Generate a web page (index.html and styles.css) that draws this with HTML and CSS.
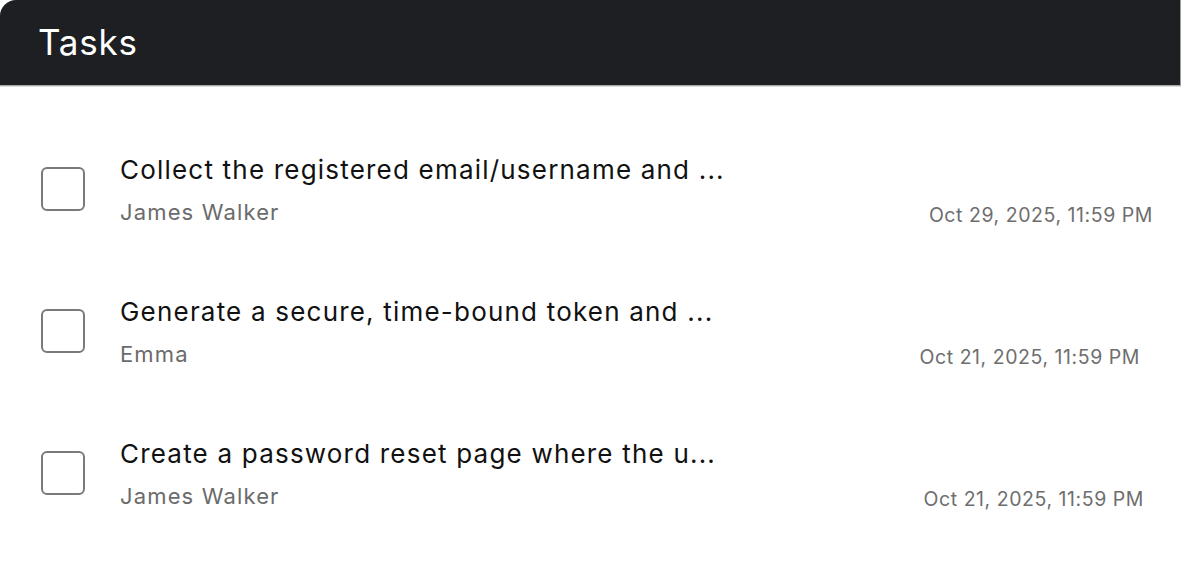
FILE: index.html
```html
<!DOCTYPE html>
<html lang="en">
<head>
<meta charset="utf-8">
<title>Tasks</title>
<link rel="stylesheet" href="styles.css">
</head>
<body>
<div class="card">
  <header class="header">
    <h1 class="header-title">Tasks</h1>
  </header>
  <ul class="list">
    <li class="row">
      <span class="check"></span>
      <div class="main">
        <div class="title">Collect the registered email/username and ...</div>
        <div class="meta">
          <span class="assignee">James Walker</span>
          <span class="date date-a">Oct 29, 2025, 11:59 PM</span>
        </div>
      </div>
    </li>
    <li class="row">
      <span class="check"></span>
      <div class="main">
        <div class="title">Generate a secure, time-bound token and ...</div>
        <div class="meta">
          <span class="assignee">Emma</span>
          <span class="date date-b">Oct 21, 2025, 11:59 PM</span>
        </div>
      </div>
    </li>
    <li class="row">
      <span class="check"></span>
      <div class="main">
        <div class="title">Create a password reset page where the u...</div>
        <div class="meta">
          <span class="assignee">James Walker</span>
          <span class="date date-c">Oct 21, 2025, 11:59 PM</span>
        </div>
      </div>
    </li>
  </ul>
</div>
</body>
</html>
```
FILE: styles.css
```css
* { box-sizing: border-box; }
html, body { margin: 0; padding: 0; background: #ffffff; }
body {
  font-family: Inter, "Noto Sans", "Liberation Sans", sans-serif;
  width: 1181px;
  height: 572px;
  overflow: hidden;
}
.card { width: 1181px; }
.header {
  height: 85px;
  background: #1e1f22;
  border-top-left-radius: 16px;
  border-right: 1px solid #9a9a9a;
  box-shadow: 0 1px 0 #a9a9a9, 0 2px 0 #dcdcdc;
  padding-left: 38px;
  display: flex;
  align-items: center;
}
.header-title {
  margin: 0;
  color: #ffffff;
  font-size: 35px;
  font-weight: 400;
  line-height: 85px;
  letter-spacing: 0.8px;
}
.list {
  list-style: none;
  margin: 0;
  padding: 33px 0 0 0;
}
.row {
  height: 142px;
  display: flex;
  align-items: center;
  padding-left: 41px;
}
.check {
  flex: 0 0 auto;
  width: 44px;
  height: 44px;
  border: 2.5px solid #7a7a7a;
  border-radius: 6px;
  background: #fff;
}
.main {
  flex: 1;
  margin-left: 35px;
  display: flex;
  flex-direction: column;
}
.title {
  font-size: 26px;
  line-height: 30px;
  color: #111111;
  letter-spacing: 1.2px;
  padding-top: 2px;
}
.meta {
  margin-top: 14px;
  display: flex;
  justify-content: space-between;
  align-items: baseline;
}
.assignee {
  font-size: 22px;
  line-height: 26px;
  color: #6b6b6b;
  letter-spacing: 1.15px;
}
.date {
  font-size: 19.5px;
  line-height: 26px;
  color: #6e6e6e;
  letter-spacing: 0.55px;
  position: relative;
  top: 2px;
}
.date-a { margin-right: 28px; }
.date-b { margin-right: 41px; }
.date-c { margin-right: 37px; }
```
